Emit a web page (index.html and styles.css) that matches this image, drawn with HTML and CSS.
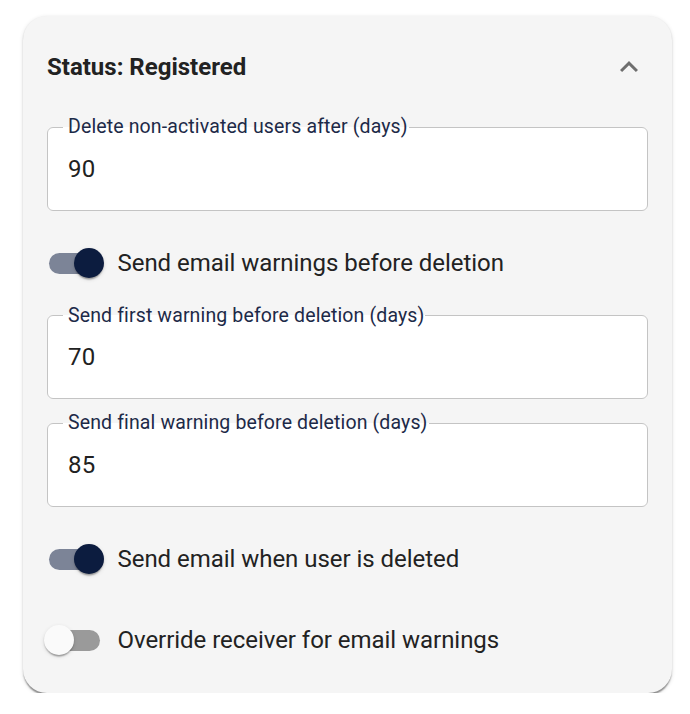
FILE: index.html
```html
<!DOCTYPE html>
<html lang="en">
<head>
<meta charset="utf-8">
<title>Status: Registered</title>
<link rel="stylesheet" href="styles.css">
</head>
<body>
<div class="card">
  <div class="card-header">
    <h2 class="title">Status: Registered</h2>
    <button class="icon-btn" aria-label="Collapse">
      <svg viewBox="0 0 24 24" width="36" height="36" aria-hidden="true"><path d="M12 8l-6 6 1.41 1.41L12 10.83l4.59 4.58L18 14z"/></svg>
    </button>
  </div>
  <div class="card-body">
    <fieldset class="field">
      <legend>Delete non-activated users after (days)</legend>
      <input class="field-input" type="text" value="90">
    </fieldset>
    <label class="switch-row">
      <span class="switch on"><span class="track"></span><span class="thumb"></span></span>
      <span class="switch-label">Send email warnings before deletion</span>
    </label>
    <fieldset class="field">
      <legend>Send first warning before deletion (days)</legend>
      <input class="field-input" type="text" value="70">
    </fieldset>
    <fieldset class="field">
      <legend>Send final warning before deletion (days)</legend>
      <input class="field-input" type="text" value="85">
    </fieldset>
    <label class="switch-row">
      <span class="switch on"><span class="track"></span><span class="thumb"></span></span>
      <span class="switch-label">Send email when user is deleted</span>
    </label>
    <label class="switch-row">
      <span class="switch"><span class="track"></span><span class="thumb"></span></span>
      <span class="switch-label">Override receiver for email warnings</span>
    </label>
  </div>
</div>
</body>
</html>
```

FILE: styles.css
```css
* { box-sizing: border-box; }

html, body {
  margin: 0;
  padding: 0;
  background: #ffffff;
}

body {
  font-family: Roboto, "Liberation Sans", Arial, sans-serif;
  color: #212121;
}

.card {
  margin: 16px 0 0 23px;
  width: 649px;
  background: #f5f5f5;
  border-radius: 24px;
  padding: 24px 24px 24.5px;
  box-shadow: 0 3px 1.5px -1.5px rgba(0,0,0,0.28), 0 1.5px 1.5px 0 rgba(0,0,0,0.16), 0 1.5px 4.5px 0 rgba(0,0,0,0.12);
}

.card-header {
  display: flex;
  align-items: center;
  justify-content: space-between;
  height: 54px;
  margin-bottom: 24px;
}

.title {
  margin: 0;
  font-size: 24px;
  font-weight: 700;
  line-height: 1;
  color: #222222;
}

.icon-btn {
  width: 36px;
  height: 36px;
  padding: 0;
  margin-right: 1px;
  border: none;
  background: transparent;
  display: flex;
  align-items: center;
  justify-content: center;
}

.icon-btn svg { fill: #6e6e6e; display: block; }

.card-body {
  display: flex;
  flex-direction: column;
  gap: 24px;
}

.field {
  margin: 0;
  border: 1px solid #c4c4c4;
  border-radius: 6px;
  background: #ffffff;
  padding: 0 15px 8px 15px;
  min-width: 0;
}

.switch-row + .field,
.field + .field { margin-top: -9px; }

.field legend {
  padding: 0 1px 0 5px;
  font-size: 19.5px;
  line-height: 18px;
  letter-spacing: 0.13px;
  color: #1d2a48;
}

.field-input {
  display: block;
  width: 100%;
  height: 65.5px;
  border: none;
  outline: none;
  background: transparent;
  padding: 0 5px;
  margin: 0;
  font-family: inherit;
  font-size: 24px;
  color: #212121;
  letter-spacing: 0.00938em;
}

.switch-row {
  display: flex;
  align-items: center;
  height: 57px;
  margin-left: -16.5px;
}

.switch {
  position: relative;
  flex: none;
  width: 87px;
  height: 57px;
  display: flex;
  align-items: center;
  justify-content: center;
}

.track {
  width: 51px;
  height: 21px;
  border-radius: 10.5px;
  background: #9a9a9a;
}

.thumb {
  position: absolute;
  top: 13.5px;
  left: 13.5px;
  width: 30px;
  height: 30px;
  border-radius: 50%;
  background: #fafafa;
  box-shadow: 0 3px 1.5px -1.5px rgba(0,0,0,0.2), 0 1.5px 1.5px 0 rgba(0,0,0,0.14), 0 1.5px 4.5px 0 rgba(0,0,0,0.12);
}

.switch.on .track { background: #7c8497; }
.switch.on .thumb { left: 43.5px; background: #0c1c3f; }

.switch-label {
  font-size: 24px;
  line-height: 1.5;
  letter-spacing: -0.04px;
  color: #222222;
}
```
